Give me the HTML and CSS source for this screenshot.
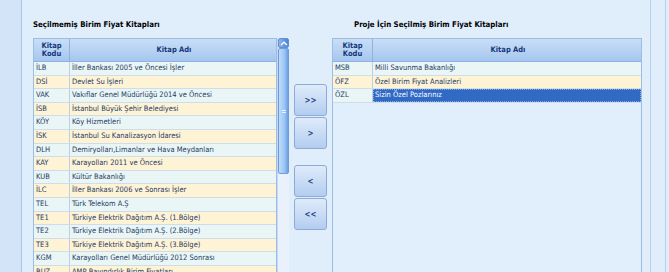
FILE: index.html
```html
<!DOCTYPE html>
<html lang="tr">
<head>
    <meta charset="UTF-8">
    <title>Birim Fiyat Kitapları</title>
    <link rel="stylesheet" href="styles.css">
</head>
<body>
    <div class="window">
        <!-- Left frame strip -->
        <div class="side-strip"></div>

        <div class="content">
            <!-- Unselected books -->
            <section class="panel panel-left">
                <h2 class="panel-title">Seçilmemiş Birim Fiyat Kitapları</h2>
                <div class="grid-box">
                    <div class="grid">
                        <div class="grid-head">
                            <div class="col-code">Kitap<br>Kodu</div>
                            <div class="col-name">Kitap Adı</div>
                        </div>
                        <div class="grid-body">
                            <div class="row"><div class="col-code">İLB</div><div class="col-name">İller Bankası 2005 ve Öncesi İşler</div></div>
                            <div class="row"><div class="col-code">DSİ</div><div class="col-name">Devlet Su İşleri</div></div>
                            <div class="row"><div class="col-code">VAK</div><div class="col-name">Vakıflar Genel Müdürlüğü 2014 ve Öncesi</div></div>
                            <div class="row"><div class="col-code">İSB</div><div class="col-name">İstanbul Büyük Şehir Belediyesi</div></div>
                            <div class="row"><div class="col-code">KÖY</div><div class="col-name">Köy Hizmetleri</div></div>
                            <div class="row"><div class="col-code">İSK</div><div class="col-name">İstanbul Su Kanalizasyon İdaresi</div></div>
                            <div class="row"><div class="col-code">DLH</div><div class="col-name">Demiryolları,Limanlar ve Hava Meydanları</div></div>
                            <div class="row"><div class="col-code">KAY</div><div class="col-name">Karayolları 2011 ve Öncesi</div></div>
                            <div class="row"><div class="col-code">KUB</div><div class="col-name">Kültür Bakanlığı</div></div>
                            <div class="row"><div class="col-code">İLC</div><div class="col-name">İller Bankası 2006 ve Sonrası İşler</div></div>
                            <div class="row"><div class="col-code">TEL</div><div class="col-name">Türk Telekom A.Ş</div></div>
                            <div class="row"><div class="col-code">TE1</div><div class="col-name">Türkiye Elektrik Dağıtım A.Ş. (1.Bölge)</div></div>
                            <div class="row"><div class="col-code">TE2</div><div class="col-name">Türkiye Elektrik Dağıtım A.Ş. (2.Bölge)</div></div>
                            <div class="row"><div class="col-code">TE3</div><div class="col-name">Türkiye Elektrik Dağıtım A.Ş. (3.Bölge)</div></div>
                            <div class="row"><div class="col-code">KGM</div><div class="col-name">Karayolları Genel Müdürlüğü 2012 Sonrası</div></div>
                            <div class="row"><div class="col-code">BUZ</div><div class="col-name">AMP Bayındırlık Birim Fiyatları</div></div>
                        </div>
                    </div>
                    <div class="scrollbar">
                        <div class="scroll-up">
                            <svg width="8" height="5" viewBox="0 0 8 5">
                                <path d="M1 4L4 1.2L7 4" fill="none" stroke="#ffffff" stroke-width="1.4"></path>
                            </svg>
                        </div>
                        <div class="scroll-thumb"><span class="grip"></span></div>
                    </div>
                </div>
            </section>

            <!-- Transfer buttons -->
            <div class="transfer">
                <button class="move-btn">&gt;&gt;</button>
                <button class="move-btn">&gt;</button>
                <button class="move-btn move-back">&lt;</button>
                <button class="move-btn">&lt;&lt;</button>
            </div>

            <!-- Selected books -->
            <section class="panel panel-right">
                <h2 class="panel-title">Proje İçin Seçilmiş Birim Fiyat Kitapları</h2>
                <div class="grid grid-right">
                    <div class="grid-head">
                        <div class="col-code">Kitap<br>Kodu</div>
                        <div class="col-name">Kitap Adı</div>
                    </div>
                    <div class="grid-body">
                        <div class="row"><div class="col-code">MSB</div><div class="col-name">Milli Savunma Bakanlığı</div></div>
                        <div class="row"><div class="col-code">ÖFZ</div><div class="col-name">Özel Birim Fiyat Analizleri</div></div>
                        <div class="row selected"><div class="col-code">ÖZL</div><div class="col-name">Sizin Özel Pozlarınız</div></div>
                    </div>
                </div>
            </section>
        </div>

        <!-- Right frame edge -->
        <div class="edge"></div>
    </div>
</body>
</html>
```

FILE: styles.css
```css
/* Base */
* {
    margin: 0;
    padding: 0;
    box-sizing: border-box;
}

body {
    width: 669px;
    height: 272px;
    overflow: hidden;
    background-color: #e0eefc;
    font-family: "DejaVu Sans Condensed", "Liberation Sans", sans-serif;
    font-size: 7.5px;
    color: #1e3a66;
}

.window {
    display: flex;
    height: 272px;
}

.side-strip {
    width: 22px;
    background-color: #d3e4f8;
    border-right: 1px solid #a9c5eb;
}

.edge {
    width: 16px;
    margin-left: 8px;
    margin-right: 3px;
    border-left: 1px solid #b7d0ef;
    border-right: 1px solid #b7d0ef;
}

.content {
    flex: 1;
    display: flex;
    padding: 19px 0 0 11px;
}

/* Panels */
.panel-left {
    width: 256px;
}

.panel-right {
    width: 310px;
}

.panel-title {
    font-size: 7.8px;
    font-weight: bold;
    color: #000000;
    height: 19px;
    line-height: 12px;
}

.panel-right .panel-title {
    padding-left: 22px;
}

/* Grid */
.grid-box {
    display: flex;
}

.grid {
    flex: 1;
    border: 1px solid #9ebde6;
    border-bottom: none;
}

.grid-right {
    height: 253px;
    background-color: #e1effd;
}

.grid-head {
    display: flex;
    height: 23px;
    background: linear-gradient(#c8def7, #a6c6ef);
    border-bottom: 1px solid #8fb2e3;
    font-weight: bold;
    color: #15387a;
    text-align: center;
    line-height: 8.5px;
}

.grid-head .col-code,
.grid-head .col-name {
    display: flex;
    align-items: center;
    justify-content: center;
}

.col-code {
    width: 36px;
    border-right: 1px solid #bccfe6;
    padding-left: 2px;
}

.grid-right .col-code {
    width: 40px;
}

.grid-head .col-code {
    padding-left: 0;
    border-right-color: #8fb2e3;
}

.col-name {
    flex: 1;
    padding-left: 2px;
}

.row {
    display: flex;
    height: 13.6px;
    line-height: 12.6px;
    border-bottom: 1px solid #cfdcea;
    background-color: #eaf6f5;
    white-space: nowrap;
}

.row:nth-child(even) {
    background-color: #fff3d5;
}

.row.selected {
    background-color: #eaf6f5;
}

.row.selected .col-name {
    background-color: #316ac5;
    color: #ffffff;
    outline: 1px dotted #8ea9d8;
    outline-offset: -1px;
}

/* Scrollbar */
.scrollbar {
    width: 12px;
    background-color: #e8f1fc;
    border-left: 1px solid #c5d8ef;
}

.scroll-up {
    height: 10px;
    display: flex;
    align-items: center;
    justify-content: center;
    background: linear-gradient(90deg, #8fb6ea, #4d84d4);
    border: 1px solid #5f8fd4;
    border-radius: 2px;
}

.scroll-thumb {
    height: 126px;
    display: flex;
    align-items: center;
    justify-content: center;
    background: linear-gradient(90deg, #c0dcfa, #9cc5f3 60%, #6b9fe2);
    border: 1px solid #6d9bdb;
    border-radius: 2px;
}

.grip {
    width: 4px;
    height: 3px;
    border-top: 1px solid #e8f2fd;
    border-bottom: 1px solid #e8f2fd;
}

/* Transfer buttons */
.transfer {
    width: 33px;
    margin: 0 5px;
    padding-top: 65px;
    display: flex;
    flex-direction: column;
    gap: 1px;
}

.move-btn {
    height: 32px;
    border: 1px solid #8eaad8;
    border-radius: 3px;
    background: linear-gradient(#dfebfa, #b3cdf0);
    color: #1c3f82;
    font-family: "DejaVu Sans Condensed", "Liberation Sans", sans-serif;
    font-size: 8px;
    font-weight: bold;
}

.move-back {
    margin-top: 15px;
}
```
